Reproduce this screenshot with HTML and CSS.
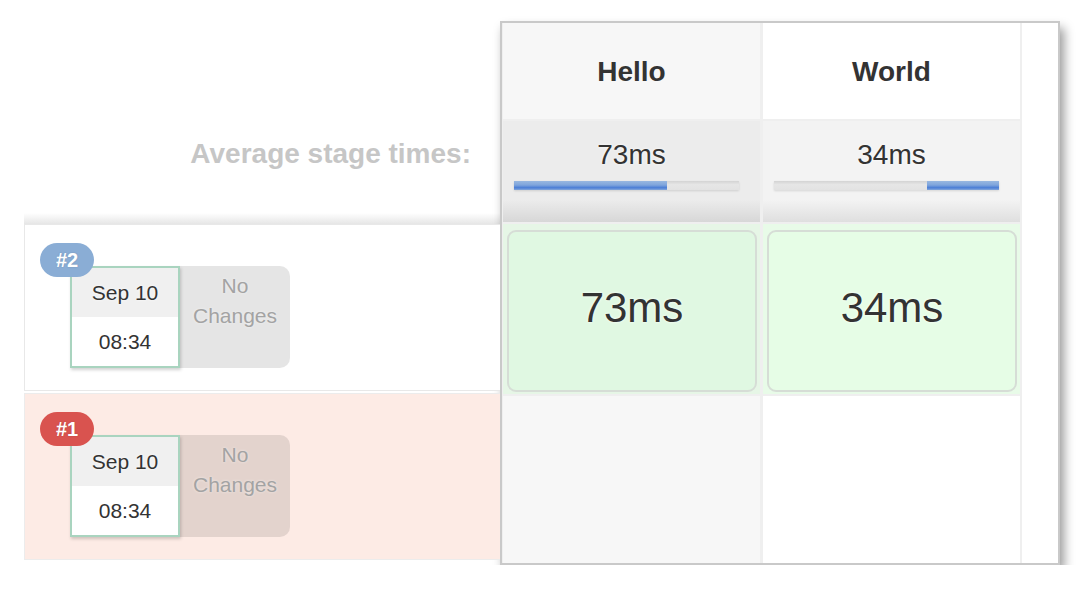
FILE: index.html
```html
<!DOCTYPE html>
<html lang="en">
<head>
<meta charset="utf-8">
<title>Stage View</title>
<link rel="stylesheet" href="styles.css">
</head>
<body>
<div class="stage-view">
  <div class="history">
    <div class="avg-label-cell"><span class="avg-label">Average stage times:</span></div>
    <div class="build-row">
      <div class="build-info">
        <span class="badge badge-blue">#2</span>
        <div class="date-box">
          <div class="date">Sep 10</div>
          <div class="time">08:34</div>
        </div>
        <div class="changes">No<br>Changes</div>
      </div>
    </div>
    <div class="build-row failed">
      <div class="build-info">
        <span class="badge badge-red">#1</span>
        <div class="date-box">
          <div class="date">Sep 10</div>
          <div class="time">08:34</div>
        </div>
        <div class="changes">No<br>Changes</div>
      </div>
    </div>
  </div>
  <div class="stages-box">
    <div class="stages-grid">
      <div class="cell head odd">Hello</div>
      <div class="cell head even">World</div>

      <div class="cell avg odd">
        <div class="avg-time">73ms</div>
        <div class="bar"><div class="bar-fill" style="left:0;width:68%"></div></div>
      </div>
      <div class="cell avg even">
        <div class="avg-time">34ms</div>
        <div class="bar"><div class="bar-fill" style="left:68%;width:32%"></div></div>
      </div>

      <div class="cell success odd"><div class="card">73ms</div></div>
      <div class="cell success even"><div class="card">34ms</div></div>

      <div class="cell empty odd"></div>
      <div class="cell empty even"></div>
    </div>
  </div>
</div>
</body>
</html>
```

FILE: styles.css
```css
html, body {
  margin: 0;
  padding: 0;
  background: #fff;
}

body {
  font-family: "Liberation Sans", Arial, Helvetica, sans-serif;
  color: #333;
}

.stage-view {
  display: flex;
  align-items: flex-start;
  padding: 21px 0 0 24px;
}

/* ---------- left history ---------- */
.history {
  width: 476px;
  display: flex;
  flex-direction: column;
}

.avg-label-cell {
  height: 203px;
  box-sizing: border-box;
  display: flex;
  align-items: flex-start;
  justify-content: flex-end;
  padding: 117px 29px 0 0;
  background: linear-gradient(to bottom, #fff 0, #fff calc(100% - 11px), #e6e6e6 100%);
}

.avg-label {
  font-size: 28px;
  font-weight: bold;
  color: #c6c6c6;
  line-height: 32px;
}

.build-row {
  height: 167px;
  box-sizing: border-box;
  border: 1px solid #e8e8e8;
  border-right: 0;
  background: #fff;
  position: relative;
}

.build-row + .build-row {
  margin-top: 2px;
}

.build-row.failed {
  background: #fdebe5;
  border-color: #ececec;
}

.build-info {
  display: flex;
  margin: 41px 0 0 45px;
  position: relative;
}

.badge {
  position: absolute;
  left: -30px;
  top: -23px;
  width: 54px;
  height: 34px;
  border-radius: 17px;
  color: #fff;
  font-size: 20px;
  font-weight: bold;
  line-height: 34px;
  text-align: center;
  z-index: 2;
  text-shadow: 0 0 2px rgba(0,0,0,0.15);
}

.badge-blue { background: #8aadd5; }
.badge-red { background: #d9534f; }

.date-box {
  width: 110px;
  height: 102px;
  box-sizing: border-box;
  border: 2px solid #a9d4bf;
  background: #fff;
  box-shadow: 1px 2px 3px rgba(0,0,0,0.18);
  display: flex;
  flex-direction: column;
  font-size: 21px;
  text-align: center;
  position: relative;
  z-index: 1;
}

.date, .time {
  flex: 1;
  display: flex;
  align-items: center;
  justify-content: center;
  text-shadow: 0 0 3px rgba(255,255,255,0.9);
}

.date {
  background: #f0f0f0;
}

.changes {
  width: 110px;
  height: 102px;
  box-sizing: border-box;
  padding-top: 5px;
  border-radius: 0 10px 10px 0;
  background: rgba(0,0,0,0.1);
  color: #a3a3a3;
  font-size: 21px;
  line-height: 30px;
  text-align: center;
  text-shadow: 0 0 3px rgba(255,255,255,0.6);
}

/* ---------- stages box ---------- */
.stages-box {
  width: 560px;
  height: 544px;
  box-sizing: border-box;
  border: 2px solid #c9c9c9;
  background: #fff;
  box-shadow: 4px 7px 10px rgba(0,0,0,0.4);
}

.stages-grid {
  display: inline-grid;
  grid-template-columns: 257px 257px;
  grid-template-rows: 96px 101px 170px 167px;
  column-gap: 3px;
  row-gap: 2px;
  padding: 0 2px 0 1px;
  background: #efefef;
}

.cell {
  box-sizing: border-box;
}

.head {
  display: flex;
  align-items: center;
  justify-content: center;
  font-size: 28px;
  font-weight: bold;
  color: #333;
  padding-top: 2px;
}

.head.odd { background: #f7f7f7; }
.head.even { background: #fff; }

.avg {
  padding: 18px 21px 0 11px;
  text-align: center;
}

.avg.odd {
  background: linear-gradient(to bottom, #ececec 0, #ececec 78%, #d7d7d7 100%);
}

.avg.even {
  background: linear-gradient(to bottom, #f3f3f3 0, #f3f3f3 78%, #dfdfdf 100%);
}

.avg-time {
  font-size: 28px;
  line-height: 32px;
  color: #333;
  text-shadow: 0 0 3px #fff;
  padding-left: 10px;
}

.bar {
  position: relative;
  margin-top: 10px;
  height: 9px;
  background: linear-gradient(to bottom, #d3d3d3, #e6e6e6 40%, #e2e2e2);
  box-shadow: 0 1px 2px rgba(0,0,0,0.12);
}

.bar-fill {
  position: absolute;
  top: 0;
  height: 100%;
  background: linear-gradient(to bottom, #98b7e0 0, #7fa5dc 45%, #4a7dd6 75%, #86a9db 100%);
}

.success {
  padding: 6px 3px 2px 4px;
}

.success.odd { background: #e6f6e6; }
.success.even { background: #e8fbe8; }

.card {
  height: 100%;
  box-sizing: border-box;
  border: 2px solid #d6ddd6;
  border-radius: 9px;
  display: flex;
  align-items: center;
  justify-content: center;
  font-size: 42px;
  color: #333;
  text-shadow: 0 0 3px #fff;
  padding-bottom: 6px;
}

.success.odd .card { background: #e0f8e2; }
.success.even .card { background: #e6fde6; }

.empty.odd { background: #f7f7f7; }
.empty.even { background: #fff; }
```
